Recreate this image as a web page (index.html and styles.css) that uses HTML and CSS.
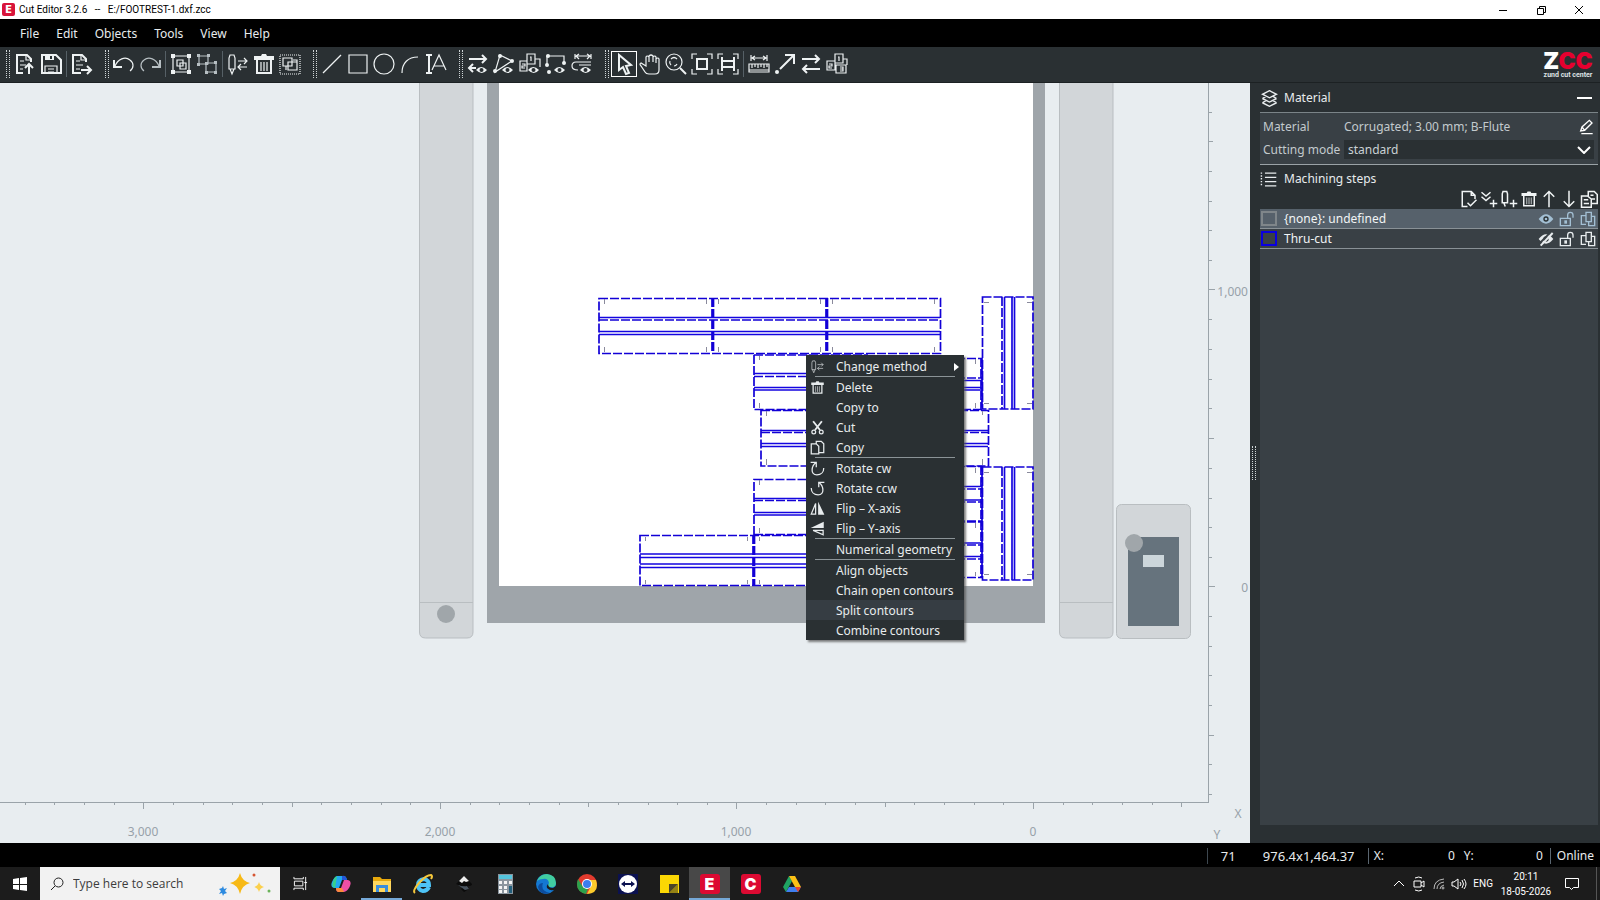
FILE: index.html
```html
<!DOCTYPE html>
<html lang="en">
<head>
<meta charset="utf-8">
<title>Cut Editor 3.2.6 -- E:/FOOTREST-1.dxf.zcc</title>
<link rel="stylesheet" href="styles.css">
</head>
<body>
<svg class="defs" aria-hidden="true">
  <symbol id="i-import" viewBox="0 0 24 24"><path class="b" d="M18 10V7l-4-4H4v18h6"/><path d="M13 3v5h5M7 9h4M7 13h6M7 17h3"/><path class="b" d="M16 22v-9M12 16l4-4 4 4"/></symbol>
  <symbol id="i-save" viewBox="0 0 24 24"><path class="b" d="M3 3h14l5 5v13H3z"/><path d="M6 22v-8h12v8M9 17h6M9 20h6"/><path class="f" d="M6 3h9v5H6z"/><path class="k" d="M11 4h2v3h-2z"/></symbol>
  <symbol id="i-export" viewBox="0 0 24 24"><path class="b" d="M16 10V7l-4-4H3v18h8"/><path d="M11 3v5h5M6 9h4M6 13h7M6 17h4"/><path class="b" d="M11 18h9M17 14l4 4-4 4"/></symbol>
  <symbol id="i-undo" viewBox="0 0 24 24"><path d="M3 14C6 7 13 4 18 8c4 3 4 8 0 11"/><path class="b" d="M2 8v7h8"/></symbol>
  <symbol id="i-redo" viewBox="0 0 24 24"><path d="M21 14C18 7 11 4 6 8c-4 3-4 8 0 11"/><path class="b" d="M22 8v7h-8"/></symbol>
  <symbol id="i-group" viewBox="0 0 24 24"><path d="M4 4h16v16H4zM8 8h6v6H8zM11 11h6v6h-6z"/><path class="f" d="M2 2h4v4H2zM18 2h4v4h-4zM2 18h4v4H2zM18 18h4v4h-4z"/></symbol>
  <symbol id="i-ungroup" viewBox="0 0 24 24"><path d="M4 4h9v8H4zM11 11h10v9H11z"/><path class="f" d="M2 2h3v3H2zM12 2h3v3h-3zM2 11h3v3H2zM19 9h3v3h-3zM10 19h3v3h-3zM19 19h3v3h-3zM10 10h3v3h-3z"/></symbol>
  <symbol id="i-method" viewBox="0 0 24 24"><path d="M4 3h4l1 3v11H3V6zM4 17l2 5 2-5M12 9h9M18 6l3 3-3 3M21 15h-9M15 12l-3 3 3 3"/></symbol>
  <symbol id="i-trash" viewBox="0 0 24 24"><path class="f" d="M2 4h7l1-2h4l1 2h7v4H2z"/><path class="b" d="M5 8v13h14V8"/><path d="M9 10v9M12 10v9M15 10v9"/></symbol>
  <symbol id="i-select-all" viewBox="0 0 24 24"><path stroke-dasharray="1 1" d="M2 3h20v19H2z"/><path d="M5 6h9v8H5zM10 10h9v8h-9zM15 8h4v4M8 14v4"/></symbol>
  <symbol id="i-line" viewBox="0 0 24 24"><path d="M3 21L21 3"/></symbol>
  <symbol id="i-rect" viewBox="0 0 24 24"><path d="M3 3h18v18H3z"/></symbol>
  <symbol id="i-circle" viewBox="0 0 24 24"><circle cx="12" cy="12" r="10"/></symbol>
  <symbol id="i-arc" viewBox="0 0 24 24"><path d="M4 21C4 11 10 5 20 5"/></symbol>
  <symbol id="i-text" viewBox="0 0 24 24"><path class="b" d="M2 3h6M5 3v18M2 21h6"/><path d="M8 18L15 3l7 15M10 14h10"/></symbol>
  <symbol id="i-dir-eye" viewBox="0 0 24 24"><path class="b" d="M3 7h17M16 3l4 4-4 4M10 16H3M7 12l-4 4 4 4"/><path class="f" d="M10 18q5-6 11 0q-5 6-11 0z"/><circle class="k" cx="15.500" cy="18" r="2"/></symbol>
  <symbol id="i-tri-eye" viewBox="0 0 24 24"><path d="M8 3l12 6L3 20z"/><circle class="f" cx="8" cy="4" r="2"/><circle class="f" cx="20" cy="9" r="2"/><circle class="f" cx="3" cy="19" r="2"/><path class="f" d="M10 18q5-6 11 0q-5 6-11 0z"/><circle class="k" cx="15.500" cy="18" r="2"/></symbol>
  <symbol id="i-order-eye" viewBox="0 0 24 24"><path d="M9 2h8v10H9zM2 9h7v10H2zM17 7h5v8M12 5h1v4M4 12h3v2H4v2h3"/><path class="f" d="M10 18q5-6 11 0q-5 6-11 0z"/><circle class="k" cx="15.500" cy="18" r="2"/></symbol>
  <symbol id="i-path-eye" viewBox="0 0 24 24"><path d="M3 12V4h17v8"/><circle class="f" cx="4" cy="4" r="2"/><circle class="f" cx="3" cy="13" r="2"/><circle class="f" cx="20" cy="11" r="2"/><circle class="f" cx="5" cy="20" r="2"/><path class="f" d="M10 18q5-6 11 0q-5 6-11 0z"/><circle class="k" cx="15.500" cy="18" r="2"/></symbol>
  <symbol id="i-width-eye" viewBox="0 0 24 24"><path d="M5 2v5M21 2v5M7 4h12M9 2L6 4l3 3M17 2l3 2-3 3M21 10H6q-4 0-4 4t6 4M21 13H9"/><path class="f" d="M10 18q5-6 11 0q-5 6-11 0z"/><circle class="k" cx="15.500" cy="18" r="2"/></symbol>
  <symbol id="i-pointer" viewBox="0 0 24 24"><path class="b" d="M7 3v15l4-3 3 7 3-1-3-7 5-1z"/></symbol>
  <symbol id="i-hand" viewBox="0 0 24 24"><path d="M8 14l-5-3q-2 1 0 3l4 6q1 2 4 2h6q4 0 4-4V7q-1-2-3 0V5q-1-2-3 0V4q-2-2-4 0v1q-2-2-3 0zM11 5v5M15 5v5M18 7v4"/></symbol>
  <symbol id="i-zoom" viewBox="0 0 24 24"><circle cx="10" cy="10" r="8"/><path d="M7 7q3-3 6 0M7 13q-2-2-1-4M13 12q-1 2-3 2"/><path class="b" d="M16 16l6 6"/></symbol>
  <symbol id="i-fit" viewBox="0 0 24 24"><path class="b" d="M7 7h10v10H7z"/><path d="M2 7V2h5M17 2h5v5M22 17v5h-5M7 22H2v-5"/></symbol>
  <symbol id="i-fit-width" viewBox="0 0 24 24"><path class="b" d="M6 5v14M18 5v14M6 9h12M6 15h12"/><path d="M2 7V2h5M17 2h5v5M22 17v5h-5M7 22H2v-5"/></symbol>
  <symbol id="i-measure" viewBox="0 0 24 24"><path d="M4 3v6M20 3v6M5 6h14M8 4L5 6l3 2M16 4l3 2-3 2M2 12h20v8H2zM5 12v4M8 12v3M11 12v4M14 12v3M17 12v4M20 12v3M2 18h20"/></symbol>
  <symbol id="i-vector" viewBox="0 0 24 24"><path class="b" d="M7 17L21 3M12 3h9v9"/><circle class="f" cx="4" cy="20" r="2"/></symbol>
  <symbol id="i-swap" viewBox="0 0 24 24"><path class="b" d="M3 7h17M16 3l4 4-4 4M21 17H4M8 13l-4 4 4 4"/></symbol>
  <symbol id="i-order" viewBox="0 0 24 24"><path d="M10 2h8v9h-8zM2 9h8v9H2zM11 13h10v8H11zM18 7h4v6M13 5h1v4M4 12h3v2H4v2h3M15 15h3v4h-3M15 17h3"/></symbol>
  <symbol id="i-layers" viewBox="0 0 24 24"><path d="M12 1l10 5-10 5L2 6zM2 12l10 5 10-5M2 18l10 5 10-5M2 12l5-3M22 12l-5-3M2 18l5-3M22 18l-5-3"/></symbol>
  <symbol id="i-list" viewBox="0 0 24 24"><path class="b" d="M7 3h16M7 9h16M7 15h16M7 21h16"/><path class="b" stroke-dasharray="2 2" d="M2 2v20"/></symbol>
  <symbol id="i-edit" viewBox="0 0 24 24"><path class="b" d="M4 18l2-6L17 2l4 4-11 11zM6 12l4 5M5 22h17"/></symbol>
  <symbol id="i-check-doc" viewBox="0 0 24 24"><path class="b" d="M10 22H3V2h12l5 5v5M10 17l4 4 8-8M15 2v5h5"/></symbol>
  <symbol id="i-add-step" viewBox="0 0 24 24"><path class="b" d="M2 3l6 5 6-5M2 9l6 5 6-5M18 13v10M13 18h10"/></symbol>
  <symbol id="i-add-tool" viewBox="0 0 24 24"><path class="b" d="M4 2h5l1 3v12H3V5zM5 17l2 5M18 13v10M13 18h10"/></symbol>
  <symbol id="i-up" viewBox="0 0 24 24"><path class="b" d="M12 23V2M5 9l7-7 7 7"/></symbol>
  <symbol id="i-down" viewBox="0 0 24 24"><path class="b" d="M12 1v21M5 15l7 7 7-7"/></symbol>
  <symbol id="i-paste" viewBox="0 0 24 24"><path class="b" d="M11 8V2h8l4 4v12h-8M2 8h8l5 4v11H2zM5 13h6M5 18h7M14 7h4M15 12h5"/></symbol>
  <symbol id="i-eye" viewBox="0 0 24 24"><path class="f" d="M1 12q11-14 22 0q-11 14-22 0z"/><circle class="k" cx="12" cy="12" r="4"/><circle class="f" cx="12" cy="12" r="2"/></symbol>
  <symbol id="i-eye-off" viewBox="0 0 24 24"><path class="f" d="M1 12q11-14 22 0q-11 14-22 0z"/><circle class="k" cx="12" cy="12" r="4"/><path class="kb" d="M1 20L20 1"/><path class="h" d="M4 22L22 3"/></symbol>
  <symbol id="i-lock" viewBox="0 0 24 24"><path class="b" d="M2 11h15v11H2zM13 11V6q0-4 4-4t4 4v4"/><path class="f" d="M8 14h4v5H8z"/></symbol>
  <symbol id="i-nest" viewBox="0 0 24 24"><path class="b" d="M9 7H2v13h7M9 2h8v14H9zM17 8h5v14h-9v-6"/></symbol>
  <symbol id="i-cut" viewBox="0 0 24 24"><path class="h" d="M5 2l11 14M19 2L8 16"/><circle class="b" cx="6" cy="19" r="3"/><circle class="b" cx="18" cy="19" r="3"/></symbol>
  <symbol id="i-copy" viewBox="0 0 24 24"><path class="b" d="M10 6V2h8l4 4v14h-8M2 6h8l4 4v12H2z"/></symbol>
  <symbol id="i-cw" viewBox="0 0 24 24"><path class="b" d="M1 2h9v8M10 2C2 8 0 22 11 22c7 0 11-5 11-11"/></symbol>
  <symbol id="i-ccw" viewBox="0 0 24 24"><path class="b" d="M23 2h-9v8M14 2c8 6 10 20-1 20C6 22 2 17 2 11"/></symbol>
  <symbol id="i-flipx" viewBox="0 0 24 24"><path class="b" d="M9 4v17H2z"/><path class="f" d="M13 1v21h10z"/></symbol>
  <symbol id="i-flipy" viewBox="0 0 24 24"><path class="f" d="M22 1v10H1z"/><path class="b" d="M21 15v7L5 15z"/></symbol>
</svg>

<header class="titlebar">
  <span class="app-badge">E</span>
  <h1 class="title">Cut Editor 3.2.6 &nbsp; -- &nbsp; E:/FOOTREST-1.dxf.zcc</h1>
  <div class="window-controls">
    <button aria-label="Minimize"><svg viewBox="0 0 10 10"><path d="M1 5.500h8"/></svg></button>
    <button aria-label="Restore"><svg viewBox="0 0 10 10"><path d="M1.500 3.500h6v6h-6zM3.500 3V1.500h6v6H8"/></svg></button>
    <button aria-label="Close"><svg viewBox="0 0 10 10"><path d="M1 1l8 8M9 1L1 9"/></svg></button>
  </div>
</header>

<nav class="menubar" aria-label="Main menu">
  <button>File</button><button>Edit</button><button>Objects</button><button>Tools</button><button>View</button><button>Help</button>
</nav>

<div class="toolbar" role="toolbar" aria-label="Tools">
  <div class="group">
    <i class="grip"></i>
    <button aria-label="Import"><svg><use href="#i-import"/></svg></button>
    <button aria-label="Save"><svg><use href="#i-save"/></svg></button>
    <i class="divider"></i>
    <button aria-label="Export"><svg><use href="#i-export"/></svg></button>
  </div>
  <div class="group">
    <i class="grip"></i>
    <button aria-label="Undo"><svg><use href="#i-undo"/></svg></button>
    <button class="dim" aria-label="Redo"><svg><use href="#i-redo"/></svg></button>
    <i class="divider"></i>
    <button aria-label="Group"><svg><use href="#i-group"/></svg></button>
    <button class="dim" aria-label="Ungroup"><svg><use href="#i-ungroup"/></svg></button>
    <i class="divider"></i>
    <button aria-label="Change method"><svg><use href="#i-method"/></svg></button>
    <button aria-label="Delete"><svg><use href="#i-trash"/></svg></button>
    <button aria-label="Select all"><svg><use href="#i-select-all"/></svg></button>
  </div>
  <div class="group">
    <i class="grip"></i>
    <button aria-label="Line"><svg><use href="#i-line"/></svg></button>
    <button aria-label="Rectangle"><svg><use href="#i-rect"/></svg></button>
    <button aria-label="Circle"><svg><use href="#i-circle"/></svg></button>
    <button aria-label="Arc"><svg><use href="#i-arc"/></svg></button>
    <button aria-label="Text"><svg><use href="#i-text"/></svg></button>
  </div>
  <div class="group">
    <i class="grip"></i>
    <button aria-label="Show direction"><svg><use href="#i-dir-eye"/></svg></button>
    <button aria-label="Show geometry"><svg><use href="#i-tri-eye"/></svg></button>
    <button aria-label="Show order"><svg><use href="#i-order-eye"/></svg></button>
    <button aria-label="Show points"><svg><use href="#i-path-eye"/></svg></button>
    <button aria-label="Show tool width"><svg><use href="#i-width-eye"/></svg></button>
  </div>
  <div class="group">
    <i class="grip"></i>
    <button class="active" aria-label="Select" aria-pressed="true"><svg><use href="#i-pointer"/></svg></button>
    <button aria-label="Pan"><svg><use href="#i-hand"/></svg></button>
    <button aria-label="Zoom"><svg><use href="#i-zoom"/></svg></button>
    <button aria-label="Fit objects"><svg><use href="#i-fit"/></svg></button>
    <button aria-label="Fit table"><svg><use href="#i-fit-width"/></svg></button>
    <i class="divider"></i>
    <button aria-label="Measure"><svg><use href="#i-measure"/></svg></button>
    <button aria-label="Start point"><svg><use href="#i-vector"/></svg></button>
    <button aria-label="Reverse"><svg><use href="#i-swap"/></svg></button>
    <button aria-label="Order"><svg><use href="#i-order"/></svg></button>
  </div>
  <div class="brand"><span class="brand-name">Z<b>CC</b></span><span class="brand-sub">zund cut center</span></div>
</div>

<main class="workspace">
  <section class="canvas" aria-label="Cutting table">
    <svg class="table" viewBox="0 83 1250 760" preserveAspectRatio="xMaxYMax slice">
      <g class="beam">
        <path d="M419.500 80V632q0 6 6 6H467q6 0 6-6V80zM419.500 602.500H473"/>
        <path d="M1059.500 80V632q0 6 6 6H1107q6 0 6-6V80zM1059.500 602.500H1113"/>
        <rect x="1116.500" y="504.500" width="74" height="134" rx="5"/>
      </g>
      <circle class="knob" cx="446" cy="614" r="9"/>
      <rect class="screen" x="1128" y="537" width="51" height="89"/>
      <circle class="knob" cx="1134" cy="543" r="9"/>
      <rect class="display" x="1143" y="555" width="21" height="12"/>
      <path class="frame" d="M487 80h558v543H487z"/>
      <path class="sheet" d="M499 80h534v506H499z"/>
      <g class="cut">
        <path d="M599 298.500H940.500V353.500H599zM712 298v55M713.500 298v55M826 298v55M827.500 298v55M599 320H940"/>
        <path d="M754 355H868M754 355V409.500H868M754 376.500H868M868 358.500H982V409.500H868M868 378H982M981 358V409"/>
        <path d="M761 410.500H988.500V466H761zM761 432.500H988"/>
        <path d="M754 535V479.500H868M754 500.500H868M868 466.500H982V577.500H868M868 489H982M868 502H982M868 522H982M868 521H982M868 545H982M868 559H982M981 466V577"/>
        <path d="M640 535.500H868V585.500H640zM753 535v50M754.500 535v50M754 534.500H868"/>
        <path d="M982.500 297H1033V409H982.500zM1002 297V409"/>
        <path d="M982.500 467H1033V580H982.500zM1002 467V580"/>
      </g>
      <g class="crease">
        <path d="M599 317.500H940M599 331.500H940M599 334.500H940"/>
        <path d="M754 373.500H868M754 387.500H868M754 390H868M868 380.500H982M868 387.500H982M868 390H982"/>
        <path d="M761 430.500H988M761 443.500H988M761 446.500H988"/>
        <path d="M754 498.500H868M754 512.500H868M754 515H868M868 486.500H982M868 500H982M868 543H982M868 556.500H982"/>
        <path d="M640 554H868M640 557.500H868M640 564H868M640 567.500H868"/>
        <path d="M1004.500 297V409M1012 297V409M1014.500 297V409M1004.500 467V580M1012 467V580M1014.500 467V580"/>
      </g>
      <path class="marks" d="M604.500 299v5M706.500 299v5M718.500 299v5M820.500 299v5M832.500 299v5M934.500 299v5M604.500 347v5M706.500 347v5M718.500 347v5M820.500 347v5M832.500 347v5M934.500 347v5M759.500 356v4M759.500 403v5M766.500 411v5M766.500 459v6M759.500 480v5M759.500 528v5M645.500 537v4M747.500 537v4M759.500 537v4M645.500 580v4M747.500 580v4M759.500 580v4M975.500 359v5M975.500 403v5M982.500 411v4M982.500 459v6M975.500 468v5M975.500 523v5M975.500 572v4M984 302.500h5M1027 302.500h5M984 403.500h5M1027 403.500h5M984 472.500h5M1027 472.500h5M984 574.500h5M1027 574.500h5"/>
      <g class="ruler">
        <path d="M0 802.500H1208.500V80"/>
        <path d="M143.500 803v6M440.500 803v6M736.500 803v6M1033.500 803v6M1209 586.500h6M1209 289.500h6"/>
        <path d="M25.500 803v2M54.500 803v2M84.500 803v2M114.500 803v2M173.500 803v2M203.500 803v2M232.500 803v2M262.500 803v2M292.500 803v4M321.500 803v2M351.500 803v2M381.500 803v2M410.500 803v2M470.500 803v2M499.500 803v2M529.500 803v2M559.500 803v2M588.500 803v4M618.500 803v2M648.500 803v2M677.500 803v2M707.500 803v2M766.500 803v2M796.500 803v2M825.500 803v2M855.500 803v2M885.500 803v4M914.500 803v2M944.500 803v2M974.500 803v2M1003.500 803v2M1063.500 803v2M1092.500 803v2M1122.500 803v2M1152.500 803v2M1181.500 803v4"/>
        <path d="M1209 112.500h3M1209 141.500h4M1209 171.500h3M1209 201.500h3M1209 230.500h3M1209 260.500h3M1209 319.500h3M1209 349.500h3M1209 379.500h3M1209 408.500h3M1209 438.500h5M1209 468.500h3M1209 498.500h3M1209 527.500h3M1209 557.500h3M1209 616.500h3M1209 646.500h3M1209 675.500h3M1209 705.500h3M1209 735.500h5M1209 764.500h3M1209 794.500h3"/>
      </g>
      <g class="ruler-text">
        <text x="143" y="836" text-anchor="middle">3,000</text>
        <text x="440" y="836" text-anchor="middle">2,000</text>
        <text x="736" y="836" text-anchor="middle">1,000</text>
        <text x="1033" y="836" text-anchor="middle">0</text>
        <text x="1248" y="296" text-anchor="end">1,000</text>
        <text x="1248" y="592" text-anchor="end">0</text>
        <text x="1238" y="818" text-anchor="middle">X</text>
        <text x="1217" y="839" text-anchor="middle">Y</text>
      </g>
    </svg>

    <div class="context-menu" role="menu">
      <button role="menuitem"><svg><use href="#i-method"/></svg><span>Change method</span><i class="submenu"></i></button>
      <hr>
      <button role="menuitem"><svg><use href="#i-trash"/></svg><span>Delete</span></button>
      <button role="menuitem"><span>Copy to</span></button>
      <button role="menuitem"><svg><use href="#i-cut"/></svg><span>Cut</span></button>
      <button role="menuitem"><svg><use href="#i-copy"/></svg><span>Copy</span></button>
      <hr>
      <button role="menuitem"><svg><use href="#i-cw"/></svg><span>Rotate cw</span></button>
      <button role="menuitem"><svg><use href="#i-ccw"/></svg><span>Rotate ccw</span></button>
      <button role="menuitem"><svg><use href="#i-flipx"/></svg><span>Flip – X-axis</span></button>
      <button role="menuitem"><svg><use href="#i-flipy"/></svg><span>Flip – Y-axis</span></button>
      <hr>
      <button role="menuitem"><span>Numerical geometry</span></button>
      <hr>
      <button role="menuitem"><span>Align objects</span></button>
      <button role="menuitem"><span>Chain open contours</span></button>
      <button role="menuitem" class="hover"><span>Split contours</span></button>
      <button role="menuitem"><span>Combine contours</span></button>
    </div>
  </section>

  <div class="splitter"><i class="grip"></i></div>

  <aside class="panel">
    <div class="panel-head">
      <svg><use href="#i-layers"/></svg><h2>Material</h2>
      <button class="collapse" aria-label="Collapse"></button>
    </div>
    <div class="material">
      <span>Material</span><span>Corrugated; 3.00 mm; B-Flute</span>
      <button class="edit" aria-label="Edit material"><svg><use href="#i-edit"/></svg></button>
      <label for="mode">Cutting mode</label>
      <div class="select-wrap">
        <select id="mode"><option>standard</option></select>
        <svg viewBox="0 0 14 8"><path d="M1 1l6 6 6-6"/></svg>
      </div>
    </div>
    <div class="panel-head steps-head"><svg><use href="#i-list"/></svg><h2>Machining steps</h2></div>
    <div class="step-tools">
      <button aria-label="Check"><svg><use href="#i-check-doc"/></svg></button>
      <button aria-label="Add step"><svg><use href="#i-add-step"/></svg></button>
      <button aria-label="Add tool"><svg><use href="#i-add-tool"/></svg></button>
      <button aria-label="Delete step"><svg><use href="#i-trash"/></svg></button>
      <button aria-label="Move up"><svg><use href="#i-up"/></svg></button>
      <button aria-label="Move down"><svg><use href="#i-down"/></svg></button>
      <button aria-label="Copy steps"><svg><use href="#i-paste"/></svg></button>
    </div>
    <ul class="steps">
      <li class="selected"><i class="swatch gray"></i><span>{none}: undefined</span>
        <button aria-label="Hide"><svg><use href="#i-eye"/></svg></button>
        <button aria-label="Lock"><svg><use href="#i-lock"/></svg></button>
        <button aria-label="Nest"><svg><use href="#i-nest"/></svg></button></li>
      <li><i class="swatch blue"></i><span>Thru-cut</span>
        <button aria-label="Show"><svg><use href="#i-eye-off"/></svg></button>
        <button aria-label="Lock"><svg><use href="#i-lock"/></svg></button>
        <button aria-label="Nest"><svg><use href="#i-nest"/></svg></button></li>
    </ul>
  </aside>
</main>

<footer class="status">
  <span class="count">71</span>
  <span class="size">976.4x1,464.37</span>
  <span class="coords"><span>X:</span><span>0</span><span class="second">Y:</span><span>0</span></span>
  <span class="online">Online</span>
</footer>

<div class="taskbar">
  <button class="start" aria-label="Start"><svg viewBox="0 0 14 14"><path d="M0 2l6-1v6H0zM7 1l7-1v7H7zM0 8h6v5l-6-1zM7 8h7v6l-7-1z"/></svg></button>
  <label class="search">
    <svg class="lens" viewBox="0 0 14 14"><circle cx="8.500" cy="5.500" r="4.500"/><path d="M5 9l-4 4"/></svg>
    <input type="text" placeholder="Type here to search" aria-label="Search">
    <svg class="sparkles" viewBox="0 0 52 24">
      <path fill="#f7b916" d="M21 1q2 8 10 10q-8 2-10 11q-2-9-10-11q8-2 10-10z"/>
      <path fill="#fbd04d" d="M40 10q1 4 5 5q-4 1-5 5q-1-4-5-5q4-1 5-5z"/>
      <path fill="#2e8be0" d="M4 14l1 3 3-1-2 3 2 2-3 1-1 2-1-3-3 1 2-3-2-2 3-1z"/>
      <circle cx="35" cy="3" r="1.500" fill="#d65532"/><circle cx="50" cy="19" r="1.500" fill="#6bb35b"/>
    </svg>
  </label>
  <button class="taskview" aria-label="Task view"><svg viewBox="0 0 16 16"><path d="M1 1v2h10V1M1 15v-2h10v2M1.500 5.500h9v5h-9zM13.500 1v14M12 7h3"/></svg></button>
  <div class="apps">
    <button aria-label="Copilot"><svg viewBox="0 0 20 20"><path fill="#21a8f0" d="M6 2h7q2 0 3 4h-5l-3 8H3q-4-1-2-6t5-6z"/><path fill="#38d08a" d="M2 8q1-5 4-6l-2 12q-4-1-2-6z"/><path fill="#2456d8" d="M11 2q4-1 5 4h-5z"/><path fill="#ec4fa4" d="M13 6h4q4 1 2 6t-6 6H7q-2-1-2-4h5z"/><path fill="#fb8a3a" d="M5 14h6l2 4H8q-3 0-3-4z"/></svg></button>
    <button class="open" aria-label="File Explorer"><svg viewBox="0 0 20 20"><path fill="#e8a90c" d="M1 3h7l2 2h9v4H1z"/><path fill="#ffd75e" d="M1 7h18v11H1z"/><path fill="#3b8ddd" d="M4 11h12v7h-3v-4H7v4H4z"/></svg></button>
    <button aria-label="Internet Explorer"><svg viewBox="0 0 20 20" fill="none"><path stroke="#4ec3f5" stroke-width="4" d="M16 13q-2 4-6 4-5-1-5-6t6-6q5 1 5 6H6"/><path stroke="#f5c73b" stroke-width="2" d="M2 19q-3-2 4-10T18 1q2 1 0 4"/></svg></button>
    <button aria-label="Inkscape"><svg viewBox="0 0 20 20"><path fill="#0b0b0b" d="M2 10l8-8 8 8q0 2-4 2l1 3-5 3-3-3 2-2z"/><path fill="#eee" d="M10 2l5 5-3 1-2-1-2 2-3-2z"/><path fill="#47525e" d="M4 11q5 2 9 1l2 3-4 1z"/></svg></button>
    <button aria-label="Calculator"><svg viewBox="0 0 20 20"><path fill="#8b959e" d="M3 0h15v20H3z"/><path fill="#54c4dc" d="M4 1h13v4H4z"/><path fill="#f4f4f4" d="M4 7h3v3H4zM9 7h3v3H9zM14 7h3v3h-3zM4 12h3v3H4zM9 12h3v3H9zM4 16h3v3H4zM9 16h3v3H9z"/><path fill="#24607d" d="M14 12h3v7h-3z"/></svg></button>
    <button aria-label="Edge"><svg viewBox="0 0 20 20"><circle cx="10" cy="10" r="10" fill="#1478d2"/><path fill="#41cda0" d="M1 7Q4 0 11 0q9 1 9 9 0 5-6 4-3-1-1-4-1-5-6-4-4 0-6 2z"/><path fill="#0d4d9e" d="M7 9q-3 8 7 10-10 3-12-6 1-4 5-4z"/><path fill="#1c1c1c" d="M12 10q0 4 5 4l3-2v3q-5 3-9-1-1-2 1-4z"/></svg></button>
    <button aria-label="Chrome"><svg viewBox="0 0 20 20"><circle cx="10" cy="10" r="10" fill="#e33b2e"/><path fill="#fccb2c" d="M10 6h9q4 13-9 14l4-8z"/><path fill="#2ba24c" d="M1 5l5 8 5 2-2 5Q-3 17 1 5z"/><circle cx="10" cy="10" r="5" fill="#fff"/><circle cx="10" cy="10" r="4" fill="#3b7ded"/></svg></button>
    <button aria-label="TeamViewer"><svg viewBox="0 0 20 20"><path fill="#0b1150" d="M0 0h20v20H0z"/><circle cx="10" cy="10" r="9" fill="#fff"/><path fill="#0b1150" d="M3 10l4-3v2h6V7l4 3-4 3v-2H7v2z"/></svg></button>
    <button aria-label="Sticky Notes"><svg viewBox="0 0 20 20"><path fill="#fbd704" d="M1 1h19v18H1z"/><path fill="#4a4328" d="M10 10h9l-9 9z"/><path fill="#2f2d26" d="M19 10v9h-9z" opacity=".5"/></svg></button>
    <button class="open current" aria-label="Cut Editor"><span class="tile">E</span></button>
    <button aria-label="Cut Center"><span class="tile">C</span></button>
    <button aria-label="Google Drive"><svg viewBox="0 0 20 20"><path fill="#1fa463" d="M7 2l3 5-6 11-3-5z"/><path fill="#fbc116" d="M7 2h6l6 11h-6z"/><path fill="#3f7ff0" d="M7 13h12l-3 5H4z"/><path fill="#e6452f" d="M13 13h6l-3 5z"/></svg></button>
  </div>
  <div class="tray">
    <svg viewBox="0 0 16 16"><path d="M3 10l5-5 5 5"/></svg>
    <svg viewBox="0 0 16 16"><path d="M3 5h7v6H3zM10 7l3-2v6l-3-2M4 2q4-2 7 0M4 14q4 2 7 0"/></svg>
    <svg class="wifi" viewBox="0 0 16 16"><path d="M3 13Q3 4 13 3M6 13q0-6 7-7M9 13q0-3 4-4"/><circle cx="12" cy="12" r="1"/></svg>
    <svg viewBox="0 0 16 16"><path d="M1 6h2l4-3v10l-4-3H1zM9 6q2 2 0 4M11 4q3 4 0 8M13 3q4 5 0 10"/></svg>
    <span class="lang">ENG</span>
    <time class="clock" datetime="2026-05-18T20:11"><span>20:11</span><span>18-05-2026</span></time>
    <button class="notify" aria-label="Notifications"><svg viewBox="0 0 16 16"><path d="M1.500 2.500h13v9h-5l-2 2-2-2h-4z"/></svg></button>
  </div>
</div>
</body>
</html>
```
FILE: styles.css
```css
* { box-sizing: border-box; }
body { margin: 0; height: 100vh; display: flex; flex-direction: column; overflow: hidden; background: #000; color: #e8ecee; font: 12px/20px "Noto Sans", sans-serif; }
button { margin: 0; padding: 0; border: 0; background: none; color: inherit; font: inherit; display: flex; align-items: center; justify-content: center; }
h1, h2 { margin: 0; font-size: inherit; font-weight: 400; }
svg { display: block; flex: none; fill: none; stroke: currentColor; }
.defs { position: absolute; width: 0; height: 0; }
.f { fill: currentColor; stroke: none; }
.b { stroke-width: 2; }
.h { stroke-width: 3; }
.k { fill: #2a3033; stroke: none; }
.kb { stroke: #394045; stroke-width: 3; }

.titlebar { flex: none; height: 19px; display: flex; align-items: center; padding-left: 2px; background: #fff; color: #000; font: 10px/18px Roboto, sans-serif; }
.app-badge { width: 13px; height: 13px; margin-right: 4px; border-radius: 2px; background: #d8143a; color: #fff; font: 900 10px/13px Inter, sans-serif; text-align: center; }
.title { white-space: pre; }
.window-controls { margin-left: auto; display: flex; padding-right: 2px; }
.window-controls button { width: 38px; height: 18px; }
.window-controls svg { width: 10px; height: 10px; }

.menubar { flex: none; height: 28px; display: flex; align-items: center; gap: 17px; padding: 1px 0 0 20px; background: #000; }

.toolbar { flex: none; height: 36px; display: flex; align-items: center; padding: 0 7px 1px 6px; background: #2a3033; border-bottom: 1px solid #1c2123; color: #eef2f3; }
.group { display: flex; align-items: center; }
.group + .group { margin-left: 10px; }
.grip { width: 4px; height: 28px; margin-right: 2px; flex: none; border: 1px dotted #cfd5d7; border-width: 0 1px; }
.divider { width: 1px; height: 26px; margin: 0 2px; background: #566066; }
.toolbar button { width: 26px; height: 26px; }
.toolbar button svg { width: 24px; height: 24px; stroke-width: 1.2; }
.toolbar .dim { color: #b7bfc3; }
.toolbar .active { border: 1px solid #fff; }
.brand { margin-left: auto; width: 50px; padding-top: 2px; display: flex; flex-direction: column; align-items: center; gap: 1px; }
.brand-name { font: 900 23px/18px Inter, sans-serif; color: #fff; }
.brand-name b { font-weight: 900; color: #e6002f; }
.brand-sub { font: 700 7px/8px Roboto, sans-serif; white-space: nowrap; color: #dfe3e5; }

.workspace { flex: 1; min-height: 0; display: flex; background: #2a3033; }
.canvas { flex: 1; min-width: 0; position: relative; background: #e8edf0; overflow: hidden; }
.table { width: 100%; height: 100%; stroke: none; }
.beam { fill: #d2d6d9; stroke: #b9bec1; }
.knob { fill: #a0a6aa; }
.screen { fill: #66737d; }
.display { fill: #ccd6db; }
.frame { fill: #9fa5aa; }
.sheet { fill: #fff; }
.cut { fill: none; stroke: #1200d6; stroke-width: 1.7; stroke-dasharray: 9 2; }
.crease { fill: none; stroke: #1405e0; stroke-width: 1.7; }
.marks { fill: none; stroke: #8a8a9c; }
.ruler { fill: none; stroke: #9aa3a9; shape-rendering: crispEdges; }
.ruler-text { fill: #97a1a9; font-size: 12px; }

.context-menu { position: absolute; left: 806px; top: 272px; width: 158px; padding-top: 1px; background: #2a3033; box-shadow: 2px 2px 2px #555b; }
.context-menu button { position: relative; width: 100%; height: 20px; justify-content: flex-start; padding: 1px 0 0 30px; }
.context-menu button svg { position: absolute; left: 4px; top: 3px; width: 15px; height: 15px; }
.context-menu hr { height: 1px; margin: 0 9px; border: 0; background: #8b9397; }
.context-menu .hover { background: #363d43; }
.submenu { margin-left: auto; margin-right: 5px; border: 4px solid transparent; border-left: 5px solid #fff; border-right: 0; }

.splitter { width: 10px; display: flex; align-items: center; padding-left: 2px; }
.splitter .grip { height: 34px; margin: 0; }

.panel { width: 340px; padding: 0 2px 18px 0; display: flex; flex-direction: column; }
.panel-head { height: 29px; display: flex; align-items: center; gap: 6px; padding: 1px 0 0 1px; }
.panel-head svg { width: 17px; height: 17px; stroke-width: 2; }
.collapse { margin-left: auto; margin-right: 6px; width: 15px; height: 2px; background: #fff; }
.material { display: grid; grid-template-columns: 81px 1fr 24px; align-items: center; grid-auto-rows: 23px; padding: 2px 0 3px 3px; border-top: 1px solid #7b8488; border-bottom: 1px solid #9aa2a6; background: #394045; color: #c3cacd; white-space: nowrap; }
.edit svg { width: 16px; height: 16px; color: #fff; }
.select-wrap { grid-column: 2 / 4; position: relative; margin-right: 4px; }
.select-wrap select { display: block; width: 100%; height: 19px; padding: 0 4px; appearance: none; border: 0; border-radius: 0; background: #2a3033; color: #c9d0d3; font: inherit; line-height: 19px; }
.select-wrap svg { position: absolute; right: 3px; top: 6px; width: 14px; height: 8px; stroke-width: 2; pointer-events: none; color: #fff; }
.steps-head { height: 25px; padding: 3px 0 0; gap: 7px; }
.step-tools { height: 19px; display: flex; justify-content: flex-end; align-items: flex-start; gap: 2px; }
.step-tools button { width: 18px; height: 18px; color: #f1f4f5; }
.step-tools svg { width: 18px; height: 18px; }
.steps { flex: 1; margin: 0; padding: 0; list-style: none; background: #394045; }
.steps li { height: 20px; display: flex; align-items: center; gap: 4px; padding: 0 2px 0 1px; border-bottom: 1px solid #899196; }
.steps .selected { background: #56616b; }
.steps span { flex: 1; margin-left: 3px; color: #f1f4f5; }
.steps button { width: 17px; height: 17px; }
.steps svg { width: 16px; height: 16px; }
.steps .selected button { color: #a3bfd3; }
.swatch { width: 16px; height: 15px; border: 2px solid #7f868a; }
.swatch.blue { border-color: #0a00e0; }

.status { flex: none; height: 24px; display: flex; justify-content: flex-end; align-items: center; padding: 1px 6px 0 0; }
.count { padding-left: 13px; border-left: 1px solid #3d474f; width: 56px; line-height: 16px; font-size: 13px; }
.size { width: 105px; font-size: 13px; }
.coords { width: 183px; padding: 0 7px 0 5px; display: grid; grid-template-columns: 20px 61px 40px 1fr; border-left: 1px solid #5a6670; border-right: 1px solid #5a6670; line-height: 16px; }
.coords span:nth-child(even) { text-align: right; }
.coords .second { padding-left: 9px; }
.online { padding-left: 6px; }

.taskbar { flex: none; height: 33px; display: flex; background: #1c1c1c; color: #fff; }
.start { width: 40px; }
.start svg { width: 14px; height: 14px; fill: #fff; stroke: none; }
.search { width: 240px; display: flex; align-items: center; gap: 9px; padding: 0 9px 0 10px; background: #f2f2f2; color: #222; }
.lens { width: 14px; height: 14px; }
.search input { flex: 1; min-width: 0; border: 0; padding: 0; background: none; font: 12px/20px "Open Sans", sans-serif; outline: 0; }
.search input::placeholder { color: #3c3c3c; opacity: 1; }
.sparkles { width: 52px; height: 24px; stroke: none; }
.taskview { width: 40px; }
.taskview svg { width: 15px; height: 15px; }
.apps { display: flex; }
.apps button { width: 41px; height: 33px; border-top: 2px solid transparent; border-bottom: 2px solid transparent; }
.apps svg { width: 20px; height: 20px; stroke: none; }
.apps .open { border-bottom-color: #76a9d8; }
.apps .current { background: #484848; border-top-color: #484848; }
.tile { width: 20px; height: 20px; border-radius: 3px; background: #dc0a32; font: 900 16px/20px Inter, sans-serif; text-align: center; }
.tray { margin-left: auto; display: flex; align-items: center; gap: 4px; padding-right: 3px; font: 10px/15px Roboto, sans-serif; }
.tray svg { width: 16px; height: 16px; }
.wifi { color: #bbb; }
.lang { margin: 0 3px 0 2px; }
.clock { width: 52px; display: flex; flex-direction: column; align-items: center; }
.notify { width: 41px; height: 33px; border-right: 1px solid #555; padding-right: 8px; }
```
